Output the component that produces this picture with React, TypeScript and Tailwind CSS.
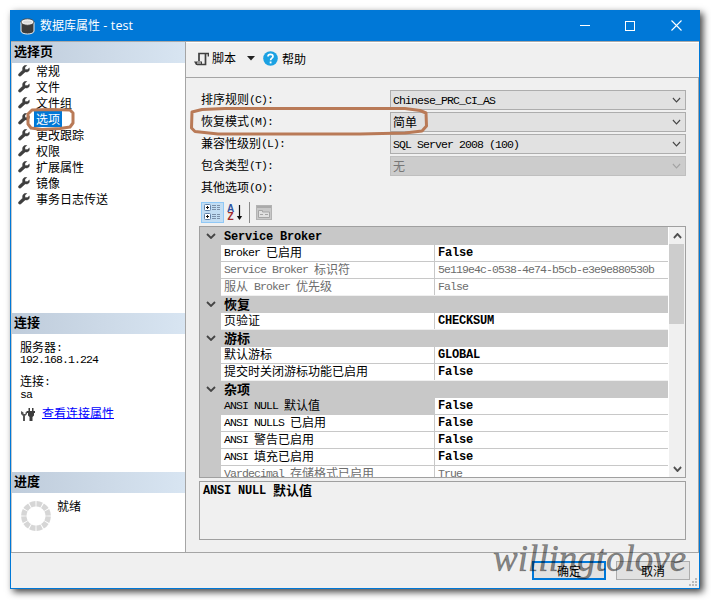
import React from "react";

const CJK = "font-['Noto_Sans_CJK_SC',sans-serif]";

/** Splits a label so that Latin runs take half-width cells and ideographs full-width ones. */
function T({ s, bold = false }: { s: string; bold?: boolean }) {
  const runs = s.match(/[\x20-\x7e]+|[^\x20-\x7e]+/g) ?? [];
  return (
    <span className={`whitespace-pre ${CJK} ${bold ? "text-[13px] font-bold" : "text-[12px]"}`}>
      {runs.map((r, i) =>
        /^[\x20-\x7e]/.test(r) ? (
          <span
            key={i}
            className={
              bold
                ? "align-[1px] font-['Liberation_Mono',monospace] text-[12px] leading-none tracking-[-0.2px]"
                : "align-[1px] font-['Liberation_Mono',monospace] text-[11.5px] leading-none tracking-[-0.9px]"
            }
          >
            {r}
          </span>
        ) : (
          <span key={i}>{r}</span>
        )
      )}
    </span>
  );
}

function Wrench() {
  return (
    <svg width="12" height="12" viewBox="0 0 12 12" className="shrink-0">
      <path
        d="M8.8 0.4 7 2.2v2.4h2.5L11.3 2.9c.5 1.8-.2 3.3-1.6 3.9-.8.4-1.7.4-2.5.1L3 10.8c-.6.6-1.6.6-2.2 0-.6-.6-.6-1.4 0-2L4.700 5.100C4.300 3.900 4.500 2.500 5.300 1.500 6.200.500 7.500.100 8.800.400Z"
        fill="#3f3f3f"
        stroke="#3f3f3f"
        strokeWidth="0.4"
      />
    </svg>
  );
}

function Chevron({ up = false, color = "#505050", w = 10, sw = 1.5 }: { up?: boolean; color?: string; w?: number; sw?: number }) {
  return (
    <svg width={w} height="6" viewBox="0 0 10 6" className="block shrink-0" preserveAspectRatio="none">
      <path d={up ? "M1 5 5 1 9 5" : "M1 1 5 5 9 1"} fill="none" stroke={color} strokeWidth={sw} />
    </svg>
  );
}

function PaneTitle({ s }: { s: string }) {
  return (
    <div className="h-[21px] shrink-0 bg-linear-to-r from-[#bfccdb] to-[#d8e5f2] pl-[2px] leading-[17px] text-black">
      <T s={s} bold />
    </div>
  );
}

const pages = ["常规", "文件", "文件组", "选项", "更改跟踪", "权限", "扩展属性", "镜像", "事务日志传送"];

function Sidebar() {
  return (
    <div className="flex w-[175px] shrink-0 flex-col border-l border-r border-l-[#c8c8c8] border-r-[#a5a5a5] bg-white">
      <div className="flex h-[271px] flex-col">
        <PaneTitle s="选择页" />
        {pages.map((p) => (
          <div key={p} className="flex h-4 items-center pl-[6px]">
            <Wrench />
            <span
              className={`ml-[4px] flex h-4 items-center px-[2px] leading-4 ${
                p === "选项" ? "bg-[#0078d7] text-white" : "text-black"
              }`}
            >
              <T s={p} />
            </span>
          </div>
        ))}
      </div>
      <div className="flex h-[159px] flex-col">
        <PaneTitle s="连接" />
        <div className="flex flex-col pt-[6px] pl-[8px] text-black">
          <div className="h-[12px] leading-[13px]"><T s="服务器:" /></div>
          <div className="h-[22px] leading-[13px]"><T s="192.168.1.224" /></div>
          <div className="h-[13px] leading-[13px]"><T s="连接:" /></div>
          <div className="h-[17px] leading-[12px]"><T s="sa" /></div>
          <div className="flex items-start">
            <svg width="15" height="14" viewBox="0 0 15 14" className="mt-[4px]">
              <path d="M1 3v3l2 2v5h2V8l2-2V3L5.500 4.500v1.500h-2V4.500Z" fill="#555" />
              <path d="M7 3h1.500V0H10v3h2V0h1.500v3H15v2h-1v2.500l-1.500 1.500v4h-3V9L8 7.500V5H7Z" fill="#3d3d3d" />
            </svg>
            <span className="ml-[7px] h-[15px] border-b border-[#0000ff] leading-[17px] text-[#0000ff]">
              <T s="查看连接属性" />
            </span>
          </div>
        </div>
      </div>
      <PaneTitle s="进度" />
      <div className="flex flex-1 pl-[9px]">
        <svg width="30" height="30" viewBox="0 0 30 30" className="mt-[8px]">
          <circle cx="15" cy="15" r="12.200" fill="none" stroke="#d6d6d6" strokeWidth="5.400" pathLength="120" strokeDasharray="8.5 1.5" strokeDashoffset="-0.750" />
        </svg>
        <span className="mt-[4px] ml-[6px] h-4 leading-4 text-black"><T s="就绪" /></span>
      </div>
    </div>
  );
}

const combos = [
  { label: "排序规则(C):", value: "Chinese_PRC_CI_AS" },
  { label: "恢复模式(M):", value: "简单" },
  { label: "兼容性级别(L):", value: "SQL Server 2008 (100)" },
  { label: "包含类型(T):", value: "无", off: true },
];

type Row = { head?: string; name?: string; value?: string; off?: boolean; sel?: boolean; last?: boolean };
const rows: Row[] = [
  { head: "Service Broker" },
  { name: "Broker 已启用", value: "False" },
  { name: "Service Broker 标识符", value: "5e119e4c-0538-4e74-b5cb-e3e9e880530b", off: true },
  { name: "服从 Broker 优先级", value: "False", off: true, last: true },
  { head: "恢复" },
  { name: "页验证", value: "CHECKSUM", last: true },
  { head: "游标" },
  { name: "默认游标", value: "GLOBAL" },
  { name: "提交时关闭游标功能已启用", value: "False", last: true },
  { head: "杂项" },
  { name: "ANSI NULL 默认值", value: "False", sel: true },
  { name: "ANSI NULLS 已启用", value: "False" },
  { name: "ANSI 警告已启用", value: "False" },
  { name: "ANSI 填充已启用", value: "False" },
  { name: "Vardecimal 存储格式已启用", value: "True", off: true },
];

function PropertyGrid() {
  return (
    <div className="flex h-[252px] w-[487px] overflow-hidden border border-[#a0a0a0] bg-white">
      <div className="flex w-[468px] shrink-0 flex-col bg-[#c8c8c8] pt-px">
        {rows.map((r, i) =>
          r.head ? (
            <div key={i} className="flex h-[17px] shrink-0">
              <div className="flex w-[21px] justify-center pt-[5px]"><Chevron color="#444" w={10} sw={1.8} /></div>
              <span className="pl-[3px] leading-[14px] text-black"><T s={r.head} bold /></span>
            </div>
          ) : (
            <div key={i} className="flex h-[17px] shrink-0 pl-[21px]">
              <div
                className={`flex h-[17px] w-full border-b ${r.last ? "border-[#f0f0f0]" : "border-[#c8c8c8]"} ${
                  r.off ? "text-[#6d6d6d]" : "text-black"
                }`}
              >
                <div className={`w-[214px] shrink-0 border-r border-[#c8c8c8] pl-[3px] leading-[13px] ${r.sel ? "bg-[#c8c8c8]" : "bg-white"}`}>
                  <T s={r.name!} />
                </div>
                <div className="flex-1 bg-white pl-[3px] leading-[13px]">
                  <T s={r.value!} bold={!r.off} />
                </div>
              </div>
            </div>
          )
        )}
      </div>
      <div className="ml-px flex w-[16px] flex-col items-center bg-[#f0f0f0]">
        <div className="flex h-[17px] items-center"><Chevron up w={9} sw={2} /></div>
        <div className="mr-px h-[80px] w-[15px] bg-[#cdcdcd]" />
        <div className="mt-auto flex h-[17px] items-center"><Chevron w={9} sw={2} /></div>
      </div>
    </div>
  );
}

function GridTools() {
  return (
    <div className="flex h-[24px] items-start pl-[2px]">
      <div className="flex h-[21px] w-[23px] items-center justify-center border border-[#90c8f6] bg-[#c2ddf3]">
        <svg width="17" height="17" viewBox="0 0 17 17">
          {[1, 10].map((y) => (
            <g key={y}>
              <rect x="0.500" y={y - 0.500} width="6" height="6" rx="1" fill="#fff" stroke="#6282a8" />
              <path d={`M2 ${y + 2.500}h3M3.500 ${y + 1}v3`} stroke="#111" />
              <path d={`M8 ${y + 0.500}h4M13 ${y + 0.500}h3M8 ${y + 2.500}h4M13 ${y + 2.500}h3M8 ${y + 4.500}h4M13 ${y + 4.500}h3`} stroke="#7a8fa8" />
            </g>
          ))}
        </svg>
      </div>
      <div className="ml-[3px] flex h-[21px] w-[17px] items-center">
        <svg width="8" height="17" viewBox="0 0 8 17" className="font-['Liberation_Sans',sans-serif] text-[10px] font-bold">
          <text x="0" y="8" fill="#2d52a0">A</text>
          <text x="0.5" y="16" fill="#a02828">Z</text>
        </svg>
        <svg width="7" height="16" viewBox="0 0 7 16" className="ml-[1px]">
          <path d="M3.500 0v13" stroke="#111" strokeWidth="1.200" />
          <path d="M.8 11h5.400L3.500 15Z" fill="#111" />
        </svg>
      </div>
      <div className="ml-[5px] h-[21px] w-px bg-[#8a8a8a]" />
      <svg width="16" height="15" viewBox="0 0 16 15" className="mt-[3px] ml-[6px]">
        <rect x="0.500" y="0.500" width="15" height="14" fill="#c8c8c8" stroke="#b3b3b3" />
        <path d="M1 2h14" stroke="#aaa" strokeWidth="2" />
        <path d="M2.500 5.500h4v1.500h7v5.500h-11Z" fill="#e0e0e0" stroke="#a5a5a5" />
        <path d="M4 9.500h3M9 9.500h3" stroke="#a5a5a5" />
      </svg>
    </div>
  );
}

export default function App() {
  return (
    <div className="relative h-[600px] w-[711px] overflow-hidden bg-white pt-[10px] pl-[10px]">
      <div className="flex h-[579px] w-[690px] flex-col border border-[#0078d7] bg-[#f0f0f0] shadow-[3px_3px_7px_rgba(0,0,0,0.75)]">
        <div className="flex h-[30px] shrink-0 items-center bg-[#0078d7] pl-[9px] text-white">
          <svg width="15" height="17" viewBox="0 0 15 17">
            <path d="M1 4v9c0 4 13 4 13 0V4Z" fill="#3c3c3c" stroke="#eee" />
            <ellipse cx="7.500" cy="4" rx="6.500" ry="3.200" fill="#f3f3f3" stroke="#3c3c3c" strokeWidth="0.800" />
            <ellipse cx="7.500" cy="4" rx="4.500" ry="1.600" fill="#dcdcdc" />
          </svg>
          <span className="ml-[5px] pb-px font-['Noto_Sans_CJK_SC',sans-serif] text-[12px] leading-[18px] whitespace-pre">
            数据库属性<span className="font-['Open_Sans',sans-serif] text-[12.5px] tracking-[0.1px]"> - test</span>
          </span>
          <div className="mr-[17px] ml-auto flex items-center pb-px">
            <svg width="10" height="11" className="mr-[35px]"><path d="M0 5.500h10" stroke="#fff" /></svg>
            <svg width="10" height="10" className="mr-[36px]"><rect x="0.500" y="0.500" width="9" height="9" fill="none" stroke="#fff" /></svg>
            <svg width="11" height="11"><path d="M.5.500l10 10M10.500.500l-10 10" stroke="#fff" strokeWidth="1.100" /></svg>
          </div>
        </div>
        <div className="flex h-[511px] shrink-0 border-t border-[#aaa]">
          <Sidebar />
          <div className="flex min-w-0 flex-1 flex-col">
            <div className="flex h-[36px] shrink-0 items-center border-t border-b border-b-[#a5a5a5] border-t-white pb-[3px] pl-[8px] text-black">
              <svg width="15" height="14" viewBox="0 0 15 14">
                <path d="M5 9V1.500h9.500V4.500M11.500 2v10.500H3" fill="none" stroke="#404040" strokeWidth="1.700" />
                <path d="M0 9.500h8v3.500H2Z" fill="#404040" />
                <path d="M3 11h4" stroke="#eee" />
              </svg>
              <span className="ml-[3px] text-[12px] leading-4"><T s="脚本" /></span>
              <svg width="8" height="5" className="ml-[11px]"><path d="M0 0h8L4 4.500Z" fill="#222" /></svg>
              <svg width="15" height="15" viewBox="0 0 15 15" className="ml-[8px]">
                <circle cx="7.500" cy="7.500" r="7.300" fill="#1ba1e2" />
                <path d="M5 5.600C5 2.500 10 2.600 10 5.500 10 7.200 7.600 7.200 7.600 9.200" fill="none" stroke="#fff" strokeWidth="1.700" />
                <rect x="6.700" y="10.500" width="1.800" height="1.900" fill="#fff" />
              </svg>
              <span className="ml-[4px] leading-4"><T s="帮助" /></span>
            </div>
            <div className="flex flex-1 flex-col border-r border-[#a5a5a5] pt-[12px] pl-[13px]">
              {combos.map((c) => (
                <div key={c.label} className="mb-[2px] flex h-[20px]">
                  <span className="w-[191px] pl-[2px] leading-[16px] text-black"><T s={c.label} /></span>
                  <div
                    className={`flex h-[20px] w-[296px] items-center justify-between border pr-[4px] pl-[2px] leading-[18px] ${
                      c.off ? "border-[#bfbfbf] bg-[#cccccc] text-[#777]" : "border-[#adadad] bg-[#e1e1e1] text-black"
                    }`}
                  >
                    <T s={c.value} />
                    <Chevron color={c.off ? "#a3a3a3" : "#444"} w={9} sw={1.2} />
                  </div>
                </div>
              ))}
              <div className="h-[24px] pl-[2px] leading-[16px] text-black"><T s="其他选项(O):" /></div>
              <GridTools />
              <PropertyGrid />
              <div className="mt-[3px] h-[59px] w-[487px] border border-[#a0a0a0] pl-[3px] leading-[14px] text-black">
                <T s="ANSI NULL 默认值" bold />
              </div>
            </div>
          </div>
        </div>
        <div className="flex flex-1 justify-end border-t border-[#a5a5a5] pt-[8px] pr-[9px] text-black">
          <div className="flex h-[19px] w-[74px] items-center justify-center border-2 border-[#0078d7] bg-[#e1e1e1] leading-[15px]"><T s="确定" /></div>
          <div className="ml-[10px] flex h-[19px] w-[74px] items-center justify-center border border-[#adadad] bg-[#e1e1e1] leading-[17px]"><T s="取消" /></div>
        </div>
      </div>

      {/* resize grip */}
      <svg width="8" height="8" className="absolute top-[578px] left-[689px]">
        <path d="M6 0h2v2H6zM3 3h2v2H3zM6 3h2v2H6zM0 6h2v2H0zM3 6h2v2H3zM6 6h2v2H6z" fill="#bbb" />
      </svg>
      {/* marker strokes around the highlighted setting */}
      <svg width="711" height="600" className="pointer-events-none absolute top-0 left-0">
        <g fill="none" stroke="#b97a57" strokeWidth="3" strokeLinejoin="round">
          <path d="M32 110 50 109.500 70 110 73 113V123L70 127 60 128.500 42 129.500 31 128 28 124V114Z" />
          <path d="M192 112 202 109.500 225 108.500 405 108.500 420 110.500 426 113 426.500 126 422 131 405 133 360 134 218 134 195 131.500 191.500 128Z" />
        </g>
      </svg>
      <div className="absolute top-[539px] left-[493px] h-[46px] w-[196px] font-['Liberation_Serif',serif] text-[37px] leading-[40px] whitespace-nowrap text-black/45 italic [-webkit-text-stroke:0.7px_rgb(0_0_0/0.3)]">
        willingtolove
      </div>
    </div>
  );
}
